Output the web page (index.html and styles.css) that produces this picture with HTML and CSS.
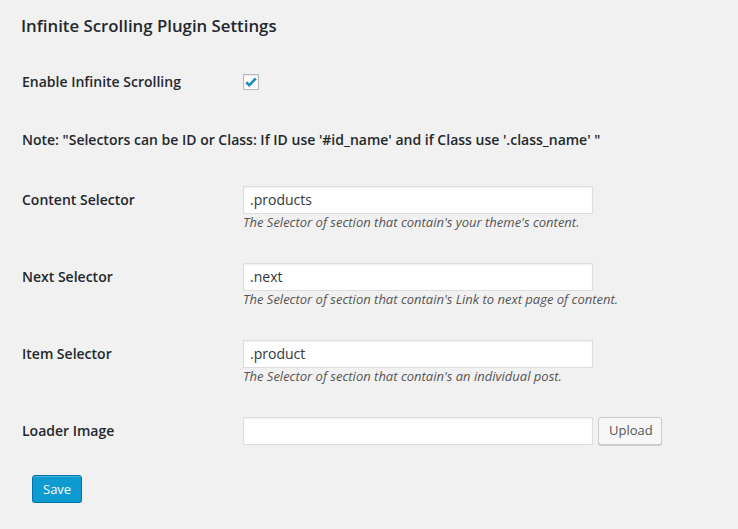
FILE: index.html
```html
<!DOCTYPE html>
<html>
<head>
<meta charset="utf-8">
<link rel="stylesheet" href="styles.css">
</head>
<body>
<div class="wrap">
  <h2 class="title">Infinite Scrolling Plugin Settings</h2>
  <div class="row row-check">
    <div class="label">Enable Infinite Scrolling</div>
    <div class="field">
      <span class="checkbox">
        <svg width="14" height="14" viewBox="0 0 14 14"><path d="M2.2 7.2 L5.3 10.2 L11.8 3.4" fill="none" stroke="#1e8cbe" stroke-width="2.6" stroke-linecap="butt" stroke-linejoin="miter"/></svg>
      </span>
    </div>
  </div>
  <div class="note">Note: "Selectors can be ID or Class: If ID use '#id_name' and if Class use '.class_name' "</div>
  <div class="row row-input first">
    <div class="label">Content Selector</div>
    <div class="field">
      <input class="text" type="text" value=".products">
      <p class="desc">The Selector of section that contain's your theme's content.</p>
    </div>
  </div>
  <div class="row row-input">
    <div class="label">Next Selector</div>
    <div class="field">
      <input class="text" type="text" value=".next">
      <p class="desc">The Selector of section that contain's Link to next page of content.</p>
    </div>
  </div>
  <div class="row row-input">
    <div class="label">Item Selector</div>
    <div class="field">
      <input class="text" type="text" value=".product">
      <p class="desc">The Selector of section that contain's an individual post.</p>
    </div>
  </div>
  <div class="row row-input">
    <div class="label">Loader Image</div>
    <div class="field inline">
      <input class="text" type="text" value="">
      <button class="btn">Upload</button>
    </div>
  </div>
  <div class="submit">
    <button class="btn-primary">Save</button>
  </div>
</div>
</body>
</html>
```

FILE: styles.css
```css
html, body {
  margin: 0;
  padding: 0;
  background: #f1f1f1;
}
body {
  font-family: "Open Sans", "Noto Sans", sans-serif;
  color: #23282d;
  font-size: 14px;
}
.wrap {
  padding: 0 0 0 22px;
}
.title {
  margin: 0 0 0 -1px;
  padding-top: 13px;
  height: 39px;
  font-size: 16.8px;
  line-height: 26px;
  font-weight: 600;
  color: #23282d;
}
.row {
  display: flex;
  align-items: flex-start;
}
.label {
  width: 221px;
  flex: none;
  font-weight: 600;
  font-size: 14px;
}
.row-check {
  margin-top: 22px;
}
.row-check .label {
  line-height: 16px;
}
.checkbox {
  display: block;
  box-sizing: border-box;
  width: 16px;
  height: 16px;
  border: 1px solid #b4b9be;
  background: #fff;
  box-shadow: inset 0 1px 2px rgba(0,0,0,.1);
  position: relative;
}
.checkbox svg {
  position: absolute;
  left: 0;
  top: 0;
}
.note {
  margin-top: 40px;
  line-height: 20px;
  font-weight: 600;
  font-size: 14px;
}
.row-input {
  margin-top: 31px;
}
.row-input.first {
  margin-top: 36px;
}
.row-input .label {
  line-height: 28px;
}
.field.inline {
  display: flex;
  gap: 5px;
}
.text {
  display: block;
  box-sizing: border-box;
  width: 350px;
  height: 28px;
  margin: 0;
  padding: 0 6px 2px;
  border: 1px solid #ddd;
  background: #fff;
  box-shadow: inset 0 1px 2px rgba(0,0,0,.07);
  font-family: "Open Sans", "Noto Sans", sans-serif;
  font-size: 14px;
  color: #32373c;
  outline: none;
}
.desc {
  margin: -1px 0 1px;
  font-size: 13px;
  line-height: 18px;
  font-style: italic;
  color: #555;
}
.btn {
  box-sizing: border-box;
  height: 28px;
  width: 64px;
  padding: 0 10px 2px;
  border: 1px solid #ccc;
  border-radius: 3px;
  background: #f7f7f7;
  box-shadow: 0 1px 0 #ccc;
  color: #555;
  font-family: "Open Sans", "Noto Sans", sans-serif;
  font-size: 13px;
  line-height: 24px;
}
.submit {
  margin-top: 30px;
  padding-left: 10px;
}
.btn-primary {
  box-sizing: border-box;
  height: 28px;
  width: 50px;
  padding: 0 10px 1px;
  border: 1px solid #0073aa;
  border-radius: 3px;
  background: #0e9bd2;
  box-shadow: inset 0 1px 0 rgba(120,200,230,.5), 0 1px 0 rgba(0,0,0,.15);
  color: #fff;
  font-family: "Open Sans", "Noto Sans", sans-serif;
  font-size: 13px;
  line-height: 26px;
}
```
